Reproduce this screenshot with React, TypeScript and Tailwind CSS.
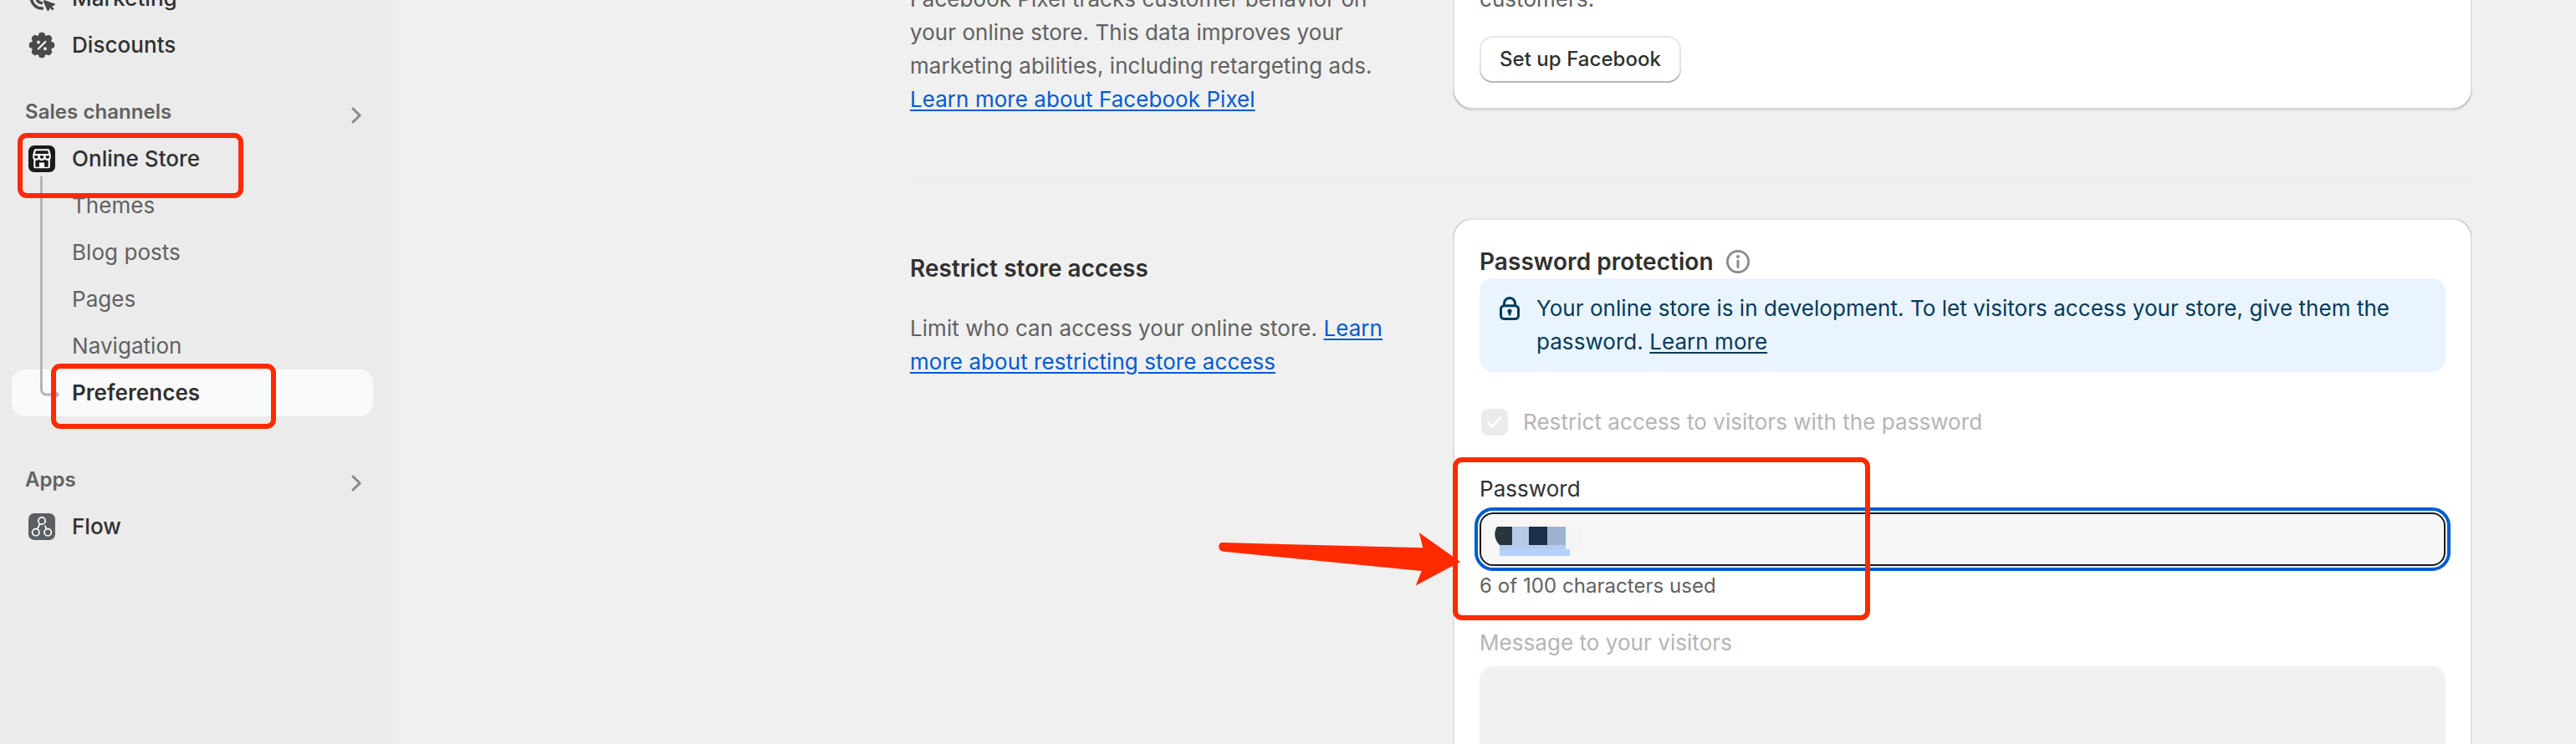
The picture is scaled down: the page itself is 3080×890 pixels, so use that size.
import type { ReactNode } from "react";

function Chevron() {
  return (
    <svg width="14" height="22" viewBox="0 0 14 22" fill="none" className="mt-2">
      <path d="M2 3l8.2 8L2 19" stroke="#8a8a8a" strokeWidth="3" strokeLinecap="round" strokeLinejoin="round" />
    </svg>
  );
}

function MarketingIcon() {
  return (
    <svg width="40" height="40" viewBox="0 0 40 40" fill="none">
      <path d="M20.500 32A12.800 12.800 0 1 1 33 19.200" stroke="#4a4a4a" strokeWidth="3.600" strokeLinecap="round" />
      <path d="M19.500 25.500A6 6 0 1 1 26 19" stroke="#4a4a4a" strokeWidth="3.600" strokeLinecap="round" />
      <path
        d="M23.300 22.300L35 26.300c1.200.4 1.200 1.500.1 2L32 29.800l2.700 2.700-2 2-2.700-2.700-1.700 2.700c-.6 1-1.600.9-2-.2l-4.400-10.600c-.4-.9.3-1.700 1.400-1.400z"
        fill="#4a4a4a"
      />
    </svg>
  );
}

function DiscountIcon() {
  const lobes = [0, 45, 90, 135, 180, 225, 270, 315];
  return (
    <svg width="40" height="40" viewBox="0 0 40 40">
      <circle cx="20" cy="20" r="12.500" fill="#4a4a4a" />
      {lobes.map((a) => (
        <rect key={a} x="16.200" y="4.800" width="7.600" height="9" rx="3.200" fill="#4a4a4a" transform={`rotate(${a} 20 20)`} />
      ))}
      <path d="M15.800 24.500l8.600-8.600" stroke="#ebebeb" strokeWidth="2.300" strokeLinecap="round" />
      <circle cx="16" cy="16.600" r="2" fill="#ebebeb" />
      <circle cx="24" cy="24.200" r="2" fill="#ebebeb" />
    </svg>
  );
}

function StoreIcon() {
  return (
    <svg width="40" height="40" viewBox="0 0 40 40">
      <rect x="4" y="4" width="32" height="32" rx="7" fill="#1a1a1a" />
      <path d="M12.500 8.300h15a1.800 1.800 0 0 1 1.700 1.300l1.500 5.400v3.500a4 4 0 0 1-.9 2.500v8.500a1.800 1.800 0 0 1-1.800 1.800H12a1.800 1.800 0 0 1-1.800-1.800V21a4 4 0 0 1-.9-2.500V15l1.500-5.400a1.800 1.800 0 0 1 1.700-1.300z" fill="#fff" />
      <path d="M12.900 10.300h14.200l1.100 3.800H11.800z" fill="#1a1a1a" />
      <path d="M11 16.200h4.400v1.300a2.200 2.200 0 0 1-4.400 0zM17.800 16.200h4.400v1.300a2.200 2.200 0 0 1-4.400 0zM24.600 16.200H29v1.300a2.200 2.200 0 0 1-4.400 0z" fill="#1a1a1a" />
      <path d="M12.300 22.200c1.700 0 3-.5 4-1.600 1 1 2.200 1.600 3.700 1.600s2.700-.6 3.700-1.600c1 1.100 2.300 1.600 4 1.600v7.600h-4.600v-5.300h-6.200v5.300h-4.600z" fill="#1a1a1a" />
    </svg>
  );
}

function FlowIcon() {
  return (
    <svg width="40" height="40" viewBox="0 0 40 40">
      <rect x="4" y="4" width="32" height="32" rx="7" fill="#5c5f62" />
      <g fill="none" stroke="#fff" strokeWidth="1.700">
        <circle cx="20" cy="13" r="4.200" />
        <circle cx="12.800" cy="26.800" r="4.200" />
        <circle cx="27.200" cy="26.800" r="4.200" />
        <path d="M17.800 16.600l-3.200 6.200M23.600 18.600l2.200 4.200" />
      </g>
    </svg>
  );
}

function InfoIcon() {
  return (
    <svg width="28" height="28" viewBox="0 0 28 28" fill="none">
      <circle cx="14" cy="14" r="12.600" stroke="#8a8a8a" strokeWidth="2.800" />
      <path d="M14 13v7.500" stroke="#8a8a8a" strokeWidth="3" strokeLinecap="round" />
      <circle cx="14" cy="8" r="2" fill="#8a8a8a" />
    </svg>
  );
}

function LockIcon() {
  return (
    <svg width="24" height="28" viewBox="0 0 24 28" fill="none">
      <rect x="1.500" y="10.700" width="21" height="15.800" rx="4" stroke="#003a5a" strokeWidth="3" />
      <path d="M5.500 10.500V8a6.500 6.500 0 0 1 13 0v2.500" stroke="#003a5a" strokeWidth="3" />
      <path d="M12 14.500a2.700 2.700 0 0 1 1.500 4.900v1.600a1.500 1.500 0 0 1-3 0v-1.600a2.700 2.700 0 0 1 1.500-4.900z" fill="#003a5a" />
    </svg>
  );
}

function NavItem({ icon, children }: { icon: ReactNode; children: ReactNode }) {
  return (
    <div className="flex h-14 items-center pl-[30px] text-[26px] font-[550] text-[#303030]">
      {icon}
      <span className="ml-4">{children}</span>
    </div>
  );
}

function SubItem({ children }: { children: ReactNode }) {
  return <div className="flex h-14 items-center pl-[86px] text-[26px] text-[#616161]">{children}</div>;
}

function NavHeading({ children }: { children: ReactNode }) {
  return (
    <div className="flex h-14 items-center justify-between pr-9 pl-[30px] text-[24px] font-semibold text-[#616161]">
      <span>{children}</span>
      <Chevron />
    </div>
  );
}

const cardShadow =
  "shadow-[0_2px_0_0_rgba(26,26,26,0.07),inset_2px_0_0_0_rgba(0,0,0,0.13),inset_-2px_0_0_0_rgba(0,0,0,0.13),inset_0_-2px_0_0_rgba(0,0,0,0.17),inset_0_2px_0_0_rgba(204,204,204,0.5)]";

const link = "text-[#005bd3] underline decoration-2 underline-offset-[3px]";

export default function App() {
  return (
    <div className="relative flex h-[890px] w-[3080px] overflow-hidden bg-[#f0f0f0] font-['Inter',sans-serif] text-[26px] leading-10 tracking-[0.05px] text-[#303030]">
      <nav className="relative h-full w-[470px] shrink-0 bg-[#ebebeb]">
        <div className="-mt-[30px]">
          <NavItem icon={<MarketingIcon />}>Marketing</NavItem>
          <NavItem icon={<DiscountIcon />}>Discounts</NavItem>
        </div>
        <div className="mt-6">
          <NavHeading>Sales channels</NavHeading>
          <NavItem icon={<StoreIcon />}>Online Store</NavItem>
          <SubItem>Themes</SubItem>
          <SubItem>Blog posts</SubItem>
          <SubItem>Pages</SubItem>
          <SubItem>Navigation</SubItem>
          <div className="mr-6 ml-[14px] flex h-14 items-center rounded-2xl bg-[#fafafa] pl-[72px] font-semibold">
            Preferences
          </div>
        </div>
        <div className="mt-12">
          <NavHeading>Apps</NavHeading>
          <NavItem icon={<FlowIcon />}>Flow</NavItem>
        </div>
        <svg className="absolute top-[210px] left-[46px]" width="28" height="272" viewBox="0 0 28 272" fill="none">
          <path d="M3.500 1.500V256a6 6 0 0 0 6 6H20" stroke="#b5b5b5" strokeWidth="3" strokeLinecap="round" />
          <path d="M20 257.500l5 4.500-5 4.500z" fill="#b5b5b5" stroke="#b5b5b5" strokeLinejoin="round" />
        </svg>
      </nav>

      <main className="ml-[618px] w-[1868px]">
        <section className="flex h-[131px] items-end">
          <p className="mr-[69px] -mb-2 w-[580px] shrink-0 text-[#616161]">
            Facebook Pixel tracks customer behavior on your online store. This data improves your marketing abilities,
            including retargeting ads. <a className={link}>Learn more about Facebook Pixel</a>
          </p>
          <div className={`flex h-[300px] grow flex-col justify-end rounded-3xl bg-white p-8 ${cardShadow}`}>
            <p className="mb-6 text-[#616161]">customers.</p>
            <button className="h-14 w-[241px] rounded-2xl bg-white text-[24px] leading-8 font-[550] shadow-[inset_0_-2px_0_0_#b5b5b5,inset_0_0_0_2px_rgba(0,0,0,0.1)]">
              Set up Facebook
            </button>
          </div>
        </section>

        <div className="mt-[88px] h-[2px] bg-[#ebebeb]" />

        <section className="mt-10 flex">
          <div className="mr-[49px] w-[600px] shrink-0 pt-10">
            <h2 className="text-[28px] font-semibold">Restrict store access</h2>
            <p className="mt-8 text-[#616161]">
              Limit who can access your online store. <a className={link}>Learn more about restricting store access</a>
            </p>
          </div>
          <div className={`h-[800px] grow rounded-3xl bg-white px-8 pt-8 ${cardShadow}`}>
            <div className="flex h-10 items-center">
              <h2 className="text-[28px] font-semibold">Password protection</h2>
              <span className="ml-[15px]">
                <InfoIcon />
              </span>
            </div>
            <div className="flex h-28 rounded-2xl bg-[#eaf4ff] pt-4 pl-6 text-[#003a5a]">
              <span className="mt-[6px] mr-5 shrink-0">
                <LockIcon />
              </span>
              <p className="w-[1040px]">
                Your online store is in development. To let visitors access your store, give them the password.{" "}
                <a className="underline decoration-2 underline-offset-[3px]">Learn more</a>
              </p>
            </div>
            <div className="mt-10 flex h-10 items-center text-[#b5b5b5]">
              <span className="ml-[2px] flex size-8 items-center justify-center rounded-lg bg-[#ebebeb]">
                <svg width="18" height="18" viewBox="0 0 18 18" fill="none">
                  <path d="M2 10l4.500 4.500L15.500 4" stroke="#fff" strokeWidth="3" strokeLinecap="round" strokeLinejoin="round" />
                </svg>
              </span>
              <span className="ml-[18px]">Restrict access to visitors with the password</span>
            </div>
            <p className="mt-10">Password</p>
            <div className="mt-2 h-16 rounded-2xl border-2 border-[#1a1a1a] bg-[#f7f7f7] outline-4 outline-offset-2 outline-[#005bd3]">
              <svg width="130" height="60" viewBox="1771 615 130 60">
                <rect x="1808" y="620" width="64" height="10" fill="#fbf5f5" />
                <rect x="1872" y="630" width="20" height="29" fill="#f4f4f5" />
                <path d="M1790 630h18v22h-15c-7-7-7-16-3-22z" fill="#27363f" />
                <rect x="1808" y="630" width="20" height="22" fill="#b6c9e6" />
                <rect x="1828" y="630" width="22" height="22" fill="#1b2e4a" />
                <rect x="1850" y="630" width="22" height="22" fill="#9fb3d1" />
                <rect x="1793" y="652" width="79" height="5" fill="#b4cbed" />
                <rect x="1793" y="657" width="84" height="8" fill="#b0d3fd" />
              </svg>
            </div>
            <p className="mt-2 h-8 text-[24px] leading-8 text-[#616161]">6 of 100 characters used</p>
            <p className="mt-8 text-[#b5b5b5]">Message to your visitors</p>
            <div className="mt-2 h-[200px] rounded-2xl bg-[#f1f1f1]" />
          </div>
        </section>
      </main>

      <div className="absolute top-[159px] left-[21px] h-[78px] w-[270px] rounded-[11px] border-6 border-[#ff2a00]" />
      <div className="absolute top-[435px] left-[61px] h-[78px] w-[269px] rounded-[11px] border-6 border-[#ff2a00]" />
      <div className="absolute top-[547px] left-[1737px] h-[195px] w-[499px] rounded-[11px] border-6 border-[#ff2a00]" />
      <svg className="absolute top-[630px] left-[1450px]" width="300" height="80" viewBox="1450 630 300 80">
        <path
          d="M1461 649L1701.300 655.300 1696.700 637 1746 672 1692.700 700.500 1699.700 683 1465 660C1459 659.500 1457.300 657 1457.300 654S1458.500 649 1461 649z"
          fill="#ff2a00"
        />
      </svg>
    </div>
  );
}
